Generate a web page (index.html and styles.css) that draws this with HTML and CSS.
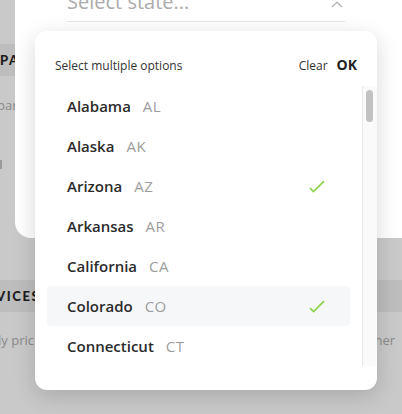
FILE: index.html
```html
<!DOCTYPE html>
<html lang="en">
<head>
<meta charset="utf-8">
<title>Select state</title>
<link rel="stylesheet" href="styles.css">
</head>
<body>
<div class="page">
  <div class="backdrop">
    <div class="gap-top"></div>
    <div class="band"><span class="band-text">PA</span></div>
    <div class="muted-line">par</div>
    <div class="tick-line"><span class="tick"></span></div>
    <div class="gap-mid"></div>
    <div class="band band-b"><span class="band-text">VICES</span></div>
    <div class="muted-row"><span>ly pric</span><span>ner</span></div>
  </div>

  <div class="modal">
    <div class="select-field">
      <span class="placeholder">Select state...</span>
      <svg class="chevron" width="12" height="7" viewBox="0 0 12 7"><path d="M1 6 L6 1.2 L11 6" fill="none" stroke="#b5b5b5" stroke-width="1.2"/></svg>
    </div>
  </div>

  <div class="popup">
    <div class="popup-head">
      <span class="head-title">Select multiple options</span>
      <div class="head-actions">
        <span class="clear">Clear</span>
        <span class="ok">OK</span>
      </div>
    </div>
    <div class="list-wrap">
      <ul class="list">
        <li class="item"><span class="name">Alabama</span><span class="abbr">AL</span></li>
        <li class="item"><span class="name">Alaska</span><span class="abbr">AK</span></li>
        <li class="item"><span class="name">Arizona</span><span class="abbr">AZ</span>
          <svg class="check" width="16" height="13" viewBox="0 0 16 13"><path d="M1 8.2 L4.6 11.6 L15 1.2" fill="none" stroke="#8fd44f" stroke-width="1.8"/></svg></li>
        <li class="item"><span class="name">Arkansas</span><span class="abbr">AR</span></li>
        <li class="item"><span class="name">California</span><span class="abbr">CA</span></li>
        <li class="item hover"><span class="name">Colorado</span><span class="abbr">CO</span>
          <svg class="check" width="16" height="13" viewBox="0 0 16 13"><path d="M1 8.2 L4.6 11.6 L15 1.2" fill="none" stroke="#8fd44f" stroke-width="1.8"/></svg></li>
        <li class="item"><span class="name">Connecticut</span><span class="abbr">CT</span></li>
      </ul>
      <div class="scrollbar"><div class="thumb"></div></div>
    </div>
  </div>
</div>
</body>
</html>
```

FILE: styles.css
```css
* { box-sizing: border-box; }
html, body { margin: 0; padding: 0; }
body {
  width: 402px;
  height: 414px;
  overflow: hidden;
  background: #c9c9c9;
  font-family: "Open Sans", "Noto Sans", sans-serif;
}
.page {
  position: relative;
  width: 402px;
  height: 414px;
  overflow: hidden;
}
.backdrop {
  display: flex;
  flex-direction: column;
}
.gap-top { height: 44px; }
.band {
  height: 32px;
  background: #bdbdbd;
  display: flex;
  align-items: center;
}
.band-text {
  font-family: "Lato", sans-serif;
  font-weight: 900;
  font-size: 13px;
  letter-spacing: 1.6px;
  color: #1c1c1c;
  margin-left: 0;
}
.band-b .band-text { margin-left: -4px; }
.muted-line {
  height: 58px;
  display: flex;
  align-items: center;
  font-size: 13px;
  color: #8a8a8a;
  margin-left: -3px;
}
.tick-line {
  height: 60px;
  display: flex;
  align-items: center;
}
.tick {
  width: 2px;
  height: 9px;
  background: #9a9a9a;
}
.gap-mid { height: 86px; }
.muted-row {
  height: 56px;
  display: flex;
  justify-content: space-between;
  align-items: center;
  font-size: 13px;
  color: #8a8a8a;
  padding-right: 7px;
}
.muted-row span:first-child { margin-left: -2px; }

.modal {
  position: absolute;
  left: 15px;
  top: -40px;
  width: 420px;
  height: 278px;
  background: #fff;
  border-radius: 16px;
}
.select-field {
  position: absolute;
  left: 52px;
  top: 0;
  width: 278px;
  height: 62px;
  border-bottom: 1px solid #e6e6e6;
  display: flex;
  align-items: flex-end;
  justify-content: space-between;
  padding-bottom: 6px;
}
.placeholder {
  font-size: 20px;
  color: #ababab;
  line-height: 26px;
}
.chevron { margin-right: 2px; margin-bottom: 7px; }

.popup {
  position: absolute;
  left: 35px;
  top: 31px;
  width: 342px;
  height: 359px;
  background: #fff;
  border-radius: 12px;
  box-shadow: 0 6px 22px rgba(0, 0, 0, 0.16);
  display: flex;
  flex-direction: column;
  padding-bottom: 24px;
}
.popup-head {
  height: 55px;
  display: flex;
  align-items: center;
  justify-content: space-between;
  padding: 0 20px 0 20px;
}
.head-title {
  font-size: 12px;
  color: #333;
  margin-top: 13px;
}
.head-actions {
  display: flex;
  align-items: baseline;
  gap: 9px;
  margin-top: 11px;
}
.clear { font-size: 12px; color: #333; }
.ok { font-size: 14px; font-weight: 700; color: #222; }
.list-wrap {
  flex: 1;
  display: flex;
  overflow: hidden;
}
.list {
  flex: 1;
  list-style: none;
  margin: 0;
  padding: 0 12px;
}
.item {
  height: 40px;
  display: flex;
  align-items: center;
  padding: 0 25px 0 20px;
  border-radius: 4px;
  font-size: 15px;
}
.item.hover { background: #f6f7f9; }
.name { color: #2b2b2b; font-weight: 600; }
.abbr { color: #9d9d9d; margin-left: 12px; letter-spacing: 0.5px; }
.check { margin-left: auto; }
.scrollbar {
  width: 15px;
  background: #fafafa;
  border-left: 1px solid #e9e9e9;
  padding: 4px 3px 0 3px;
}
.thumb {
  width: 7px;
  height: 32px;
  background: #c2c2c2;
  border-radius: 4px;
}
```
